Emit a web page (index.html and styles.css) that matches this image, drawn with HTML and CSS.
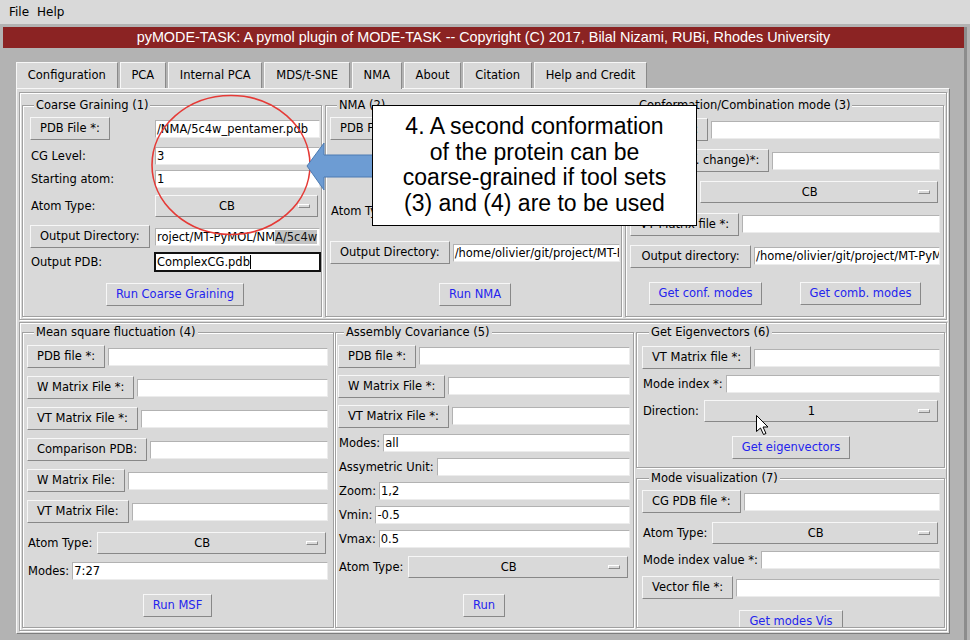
FILE: index.html
```html
<!DOCTYPE html>
<html>
<head>
<meta charset="utf-8">
<title>pyMODE-TASK</title>
<link rel="stylesheet" href="styles.css">
</head>
<body>
<div class="menubar"><span>File</span><span>Help</span></div>
<div class="win">
  <div class="titlebar">pyMODE-TASK: A pymol plugin of MODE-TASK -- Copyright (C) 2017, Bilal Nizami, RUBi, Rhodes University</div>
  <div class="tabs">
    <div class="tab">Configuration</div>
    <div class="tab">PCA</div>
    <div class="tab">Internal PCA</div>
    <div class="tab">MDS/t-SNE</div>
    <div class="tab sel">NMA</div>
    <div class="tab">About</div>
    <div class="tab">Citation</div>
    <div class="tab">Help and Credit</div>
  </div>
  <div class="panel">
    <div class="toprow">
      <fieldset class="grp g1">
        <legend>Coarse Graining (1)</legend>
        <div class="row h31"><div class="col1"><button class="btn">PDB File *:</button></div><div class="ent">/NMA/5c4w_pentamer.pdb</div></div>
        <div class="row h23"><div class="col1"><span class="lab">CG Level:</span></div><div class="ent">3</div></div>
        <div class="row h23"><div class="col1"><span class="lab">Starting atom:</span></div><div class="ent">1</div></div>
        <div class="row h31"><div class="col1"><span class="lab">Atom Type:</span></div><div class="opt"><span class="opt-t">CB</span><span class="ind"></span></div></div>
        <div class="row h31"><div class="col1"><button class="btn">Output Directory:</button></div><div class="ent">roject/MT-PyMOL/NM<span class="seltext">A/5c4w</span></div></div>
        <div class="row h20"><div class="col1"><span class="lab">Output PDB:</span></div><div class="ent focus">ComplexCG.pdb<span class="caret"></span></div></div>
        <div class="runrow mt11"><button class="btn run">Run Coarse Graining</button></div>
      </fieldset>
      <fieldset class="grp g2">
        <legend>NMA (2)</legend>
        <div class="row h31"><button class="btn">PDB File *:</button><div class="ent"></div></div>
        <div class="spacer51"></div>
        <div class="row h31"><span class="lab">Atom Type:</span><div class="opt"><span class="opt-t">CB</span><span class="ind"></span></div></div>
        <div class="row h31 mt11"><button class="btn">Output Directory:</button><div class="ent">/home/olivier/git/project/MT-PyMOL/NMA</div></div>
        <div class="runrow mt15"><button class="btn run">Run NMA</button></div>
      </fieldset>
      <fieldset class="grp g3">
        <legend>Conformation/Combination mode (3)</legend>
        <div class="row h31"><button class="btn">PDB file *:</button><div class="ent"></div></div>
        <div class="row h31"><button class="btn">PDB (conf. change)*:</button><div class="ent"></div></div>
        <div class="row h32"><span class="lab">Atom Type:</span><div class="opt"><span class="opt-t">CB</span><span class="ind"></span></div></div>
        <div class="row h32"><button class="btn">VT Matrix file *:</button><div class="ent"></div></div>
        <div class="row h32"><button class="btn wide">Output directory:</button><div class="ent">/home/olivier/git/project/MT-PyMOL/NMA</div></div>
        <div class="runrow around mt10"><button class="btn run">Get conf. modes</button><button class="btn run">Get comb. modes</button></div>
      </fieldset>
    </div>
    <div class="botrow">
      <fieldset class="grp msf">
        <legend>Mean square fluctuation (4)</legend>
        <div class="row h31"><button class="btn">PDB file *:</button><div class="ent"></div></div>
        <div class="row h31"><button class="btn">W Matrix File *:</button><div class="ent"></div></div>
        <div class="row h31"><button class="btn">VT Matrix File *:</button><div class="ent"></div></div>
        <div class="row h31"><button class="btn">Comparison PDB:</button><div class="ent"></div></div>
        <div class="row h31"><button class="btn">W Matrix File:</button><div class="ent"></div></div>
        <div class="row h31"><button class="btn">VT Matrix File:</button><div class="ent"></div></div>
        <div class="row h31"><span class="lab">Atom Type:</span><div class="opt"><span class="opt-t">CB</span><span class="ind"></span></div></div>
        <div class="row h26"><span class="lab">Modes:</span><div class="ent">7:27</div></div>
        <div class="runrow mt10"><button class="btn run">Run MSF</button></div>
      </fieldset>
      <fieldset class="grp asm">
        <legend>Assembly Covariance (5)</legend>
        <div class="row h30"><button class="btn">PDB file *:</button><div class="ent"></div></div>
        <div class="row h30"><button class="btn">W Matrix File *:</button><div class="ent"></div></div>
        <div class="row h30"><button class="btn">VT Matrix File *:</button><div class="ent"></div></div>
        <div class="row h24"><span class="lab">Modes:</span><div class="ent">all</div></div>
        <div class="row h24"><span class="lab">Assymetric Unit:</span><div class="ent"></div></div>
        <div class="row h24"><span class="lab">Zoom:</span><div class="ent">1,2</div></div>
        <div class="row h24"><span class="lab">Vmin:</span><div class="ent">-0.5</div></div>
        <div class="row h24"><span class="lab">Vmax:</span><div class="ent">0.5</div></div>
        <div class="row h31"><span class="lab">Atom Type:</span><div class="opt"><span class="opt-t">CB</span><span class="ind"></span></div></div>
        <div class="runrow mt12"><button class="btn run">Run</button></div>
      </fieldset>
      <div class="rightcol">
        <fieldset class="grp eig">
          <legend>Get Eigenvectors (6)</legend>
          <div class="row h31"><button class="btn">VT Matrix file *:</button><div class="ent"></div></div>
          <div class="row h22"><span class="lab">Mode index *:</span><div class="ent"></div></div>
          <div class="row h31"><span class="lab">Direction:</span><div class="opt"><span class="opt-t">1</span><span class="ind"></span></div></div>
          <div class="runrow mt10"><button class="btn run">Get eigenvectors</button></div>
        </fieldset>
        <fieldset class="grp vis">
          <legend>Mode visualization (7)</legend>
          <div class="row h31"><button class="btn">CG PDB file *:</button><div class="ent"></div></div>
          <div class="row h31"><span class="lab">Atom Type:</span><div class="opt"><span class="opt-t">CB</span><span class="ind"></span></div></div>
          <div class="row h24"><span class="lab">Mode index value *:</span><div class="ent"></div></div>
          <div class="row h31"><button class="btn">Vector file *:</button><div class="ent"></div></div>
          <div class="runrow mt7"><button class="btn run">Get modes Vis</button></div>
        </fieldset>
      </div>
    </div>
  </div>
</div>
<svg class="overlay" width="970" height="640" viewBox="0 0 970 640">
  <ellipse cx="231" cy="165" rx="79" ry="69.5" fill="none" stroke="#e53a36" stroke-width="1.6"/>
  <polygon points="307,166 324,143 324,155 374,155 374,177 324,177 324,190" fill="#6d9cd3" stroke="#4d7bb2" stroke-width="1"/>
  <path d="M756.5 415.5 L756.5 431.5 L760.5 428 L763.5 434.5 L766 433.5 L763 427 L768 427 Z" fill="#fff" stroke="#000" stroke-width="1"/>
</svg>
<div class="callout">
  <div>4. A second conformation</div>
  <div>of the protein can be</div>
  <div>coarse-grained if tool sets</div>
  <div>(3) and (4) are to be used</div>
</div>
</body>
</html>
```
FILE: styles.css
```css
* { box-sizing: border-box; }
html, body { margin: 0; padding: 0; }
body {
  width: 970px;
  height: 640px;
  overflow: hidden;
  position: relative;
  background: #b3b3b3;
  font-family: "DejaVu Sans", sans-serif;
  font-size: 11.5px;
  color: #000;
}
.menubar {
  height: 24px;
  background: #d9d9d9;
  display: flex;
  align-items: center;
  gap: 8px;
  padding-left: 9px;
  font-size: 12px;
}
.win {
  width: 967px;
  height: 616px;
  padding-left: 3px;
  border-right: 3px solid #8c8c8c;
}
.titlebar {
  margin-top: 3px;
  height: 21px;
  line-height: 21px;
  background: #8b2323;
  color: #fff;
  text-align: center;
  font-family: "Liberation Sans", Arial, sans-serif;
  font-size: 14.4px;
  white-space: nowrap;
}
.tabs {
  display: flex;
  gap: 2px;
  margin: 14px 0 0 13px;
  height: 26px;
  align-items: flex-start;
}
.tab {
  height: 26px;
  line-height: 24px;
  padding: 0 10.8px;
  background: #d9d9d9;
  border: 1px solid;
  border-color: #f7f7f7 #8a8a8a #d9d9d9 #f7f7f7;
  border-bottom: none;
  white-space: nowrap;
}
.tab.sel {
  height: 27px;
  margin-bottom: -1px;
  position: relative;
  z-index: 1;
}
.panel {
  margin-left: 13px;
  width: 934px;
  height: 546px;
  background: #d9d9d9;
  border: 1px solid;
  border-color: #f7f7f7 #7d7d7d #7d7d7d #f7f7f7;
  padding: 3px 2px 2px 2px;
  display: flex;
  flex-direction: column;
  gap: 2px;
}
.toprow, .botrow {
  display: flex;
  border: 1px solid #a0a0a0;
  box-shadow: inset 1px 1px 0 #fff, 1px 1px 0 #fff;
}
.toprow {
  height: 228px;
  padding: 5px 2px 2px 2px;
  gap: 3px;
}
.botrow {
  height: 309px;
  padding: 2px 1px 2px 2px;
}
.grp {
  margin: 0;
  min-width: 0;
  flex: none;
  border: 1px solid #a0a0a0;
  box-shadow: inset 1px 1px 0 #fff, 1px 1px 0 #fff;
  padding: 0 3px 0 4px;
}
legend {
  padding: 0 2px;
  margin-left: 7px;
  line-height: 14px;
  background: #d9d9d9;
  white-space: nowrap;
}
.g1 { width: 300px; padding: 1px 1px 0 4px; }
.g1 .row, .g1 .runrow { padding-left: 3px; }
.g2 { width: 297px; padding: 1px 1px 0 4px; }
.g3 { width: 319px; padding: 2px 3px 0 4px; }
.msf { width: 312px; padding: 2px 5px 0 4px; }
.asm { width: 299px; margin-left: 1px; padding: 2px 3px 0 2px; }
.asm legend { margin-left: 6px; }
.rightcol {
  width: 309px;
  margin-left: 2px;
  display: flex;
  flex-direction: column;
  gap: 3px;
}
.eig { height: 143px; flex: none; padding: 3px 4px 0 5px; }
.vis { flex: 1; padding: 1px 4px 0 5px; overflow: hidden; }

.row { display: flex; align-items: center; }
.h20 { height: 20px; }
.h22 { height: 22px; }
.h23 { height: 23px; }
.h24 { height: 24px; }
.h26 { height: 26px; }
.h30 { height: 30px; }
.h31 { height: 31px; }
.h32 { height: 32px; }
.mt7 { margin-top: 7px; }
.mt10 { margin-top: 10px; }
.mt11 { margin-top: 11px; }
.mt12 { margin-top: 12px; }
.mt15 { margin-top: 15px; }
.spacer51 { height: 51px; }

.col1 { width: 125px; flex: none; display: flex; align-items: center; }
.lab { padding-left: 1px; white-space: nowrap; flex: none; }

.btn {
  font: inherit;
  color: #000;
  height: 23px;
  margin: 0;
  padding: 0 9px;
  background: #d9d9d9;
  border: 1px solid;
  border-color: #f7f7f7 #888 #888 #f7f7f7;
  white-space: nowrap;
  flex: none;
  line-height: 21px;
}
.btn.wide { padding: 0 10.5px; }
.btn.run { color: #2424ee; }
.runrow { display: flex; justify-content: center; }
.runrow.around { justify-content: space-around; }

.ent {
  flex: 1;
  min-width: 0;
  height: 18px;
  margin-left: 3px;
  background: #fff;
  border: 1px solid;
  border-color: #b2b2b2 #ececec #ececec #b2b2b2;
  line-height: 16px;
  padding-left: 1px;
  overflow: hidden;
  white-space: nowrap;
}
.g1 .ent { margin-left: 0; }
.ent.focus {
  height: 20px;
  border: 2px solid #111;
  margin-left: -1px;
  margin-right: -1px;
  line-height: 16px;
}
.caret {
  display: inline-block;
  width: 1px;
  height: 14px;
  background: #000;
  vertical-align: -3px;
}
.seltext { background: #c3c3c3; color: #111; }

.opt {
  flex: 1;
  min-width: 0;
  height: 22px;
  margin: 0 2px 0 5px;
  display: flex;
  align-items: center;
  border: 1px solid;
  border-color: #f7f7f7 #888 #888 #f7f7f7;
  background: #d9d9d9;
}
.g1 .opt { margin-left: 0; }
.opt-t { flex: 1; text-align: center; }
.ind {
  width: 12px;
  height: 4px;
  margin-right: 7px;
  border: 1px solid;
  border-color: #fff #8a8a8a #8a8a8a #fff;
  flex: none;
}

.overlay { position: absolute; left: 0; top: 0; pointer-events: none; }
.callout {
  position: absolute;
  left: 372px;
  top: 105px;
  width: 325px;
  height: 121px;
  background: #fff;
  border: 1px solid #000;
  padding-top: 8px;
  text-align: center;
  font-family: "Liberation Sans", Arial, sans-serif;
  font-size: 23px;
  line-height: 25.7px;
  color: #000;
  white-space: nowrap;
}
```
